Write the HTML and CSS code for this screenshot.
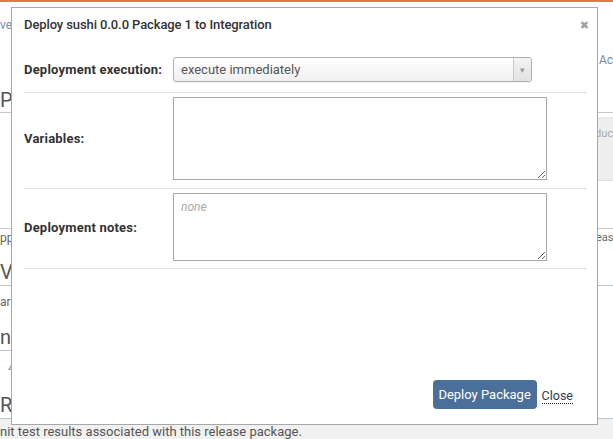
FILE: index.html
```html
<!DOCTYPE html>
<html>
<head>
<meta charset="utf-8">
<link rel="stylesheet" href="styles.css">
</head>
<body>
<div class="topbar"></div>
<div class="page">
  <div class="bg-row r-tabs"><span class="t-sm t-link">ver</span></div>
  <div class="bg-row r-pipe">
    <span class="t-lg r-pipe-h">Pip</span>
    <span class="t-sm t-link r-act">Ac</span>
  </div>
  <div class="bg-row r-block">
    <span></span>
    <div class="side-grey"><span class="t-xs t-muted">duc</span></div>
  </div>
  <div class="bg-row r-app">
    <span class="t-sm">pp</span>
    <span class="t-xs r-eas">eas</span>
  </div>
  <div class="bg-row r-var"><span class="t-lg">Va</span></div>
  <div class="bg-row r-sm"><span class="t-sm">ari</span></div>
  <div class="bg-row r-unit"><span class="t-lg">n</span></div>
  <div class="bg-row r-time"><span class="t-sm t-teal">4:</span></div>
  <div class="bg-row r-re"><span class="t-lg">Re</span></div>
  <div class="bg-row r-foot"><span class="t-foot">nit test results associated with this release package.</span></div>
</div>

<div class="modal">
  <div class="modal-head">
    <div class="modal-title">Deploy sushi 0.0.0 Package 1 to Integration</div>
    <div class="modal-x">&#x2716;</div>
  </div>
  <div class="modal-body">
    <div class="row row-first">
      <div class="label">Deployment execution:</div>
      <div class="field">
        <div class="select">
          <span class="select-text">execute immediately</span>
          <span class="select-arrow">&#9662;</span>
        </div>
      </div>
    </div>
    <div class="row">
      <div class="label">Variables:</div>
      <div class="field"><textarea class="ta ta-vars"></textarea></div>
    </div>
    <div class="row row-last">
      <div class="label">Deployment notes:</div>
      <div class="field"><textarea class="ta ta-notes" placeholder="none"></textarea></div>
    </div>
  </div>
  <div class="modal-foot">
    <button class="btn">Deploy Package</button>
    <a class="close-link">Close</a>
  </div>
</div>
</body>
</html>
```
FILE: styles.css
```css
html, body {
  margin: 0;
  padding: 0;
}
body {
  width: 613px;
  height: 439px;
  overflow: hidden;
  background: #fff;
  font-family: Roboto, "Open Sans", sans-serif;
  color: #333;
  position: relative;
}
.topbar {
  height: 2px;
  background: #e8734e;
}
.page {
  display: flex;
  flex-direction: column;
}
.bg-row {
  display: flex;
  justify-content: space-between;
  align-items: flex-start;
  white-space: nowrap;
  overflow: hidden;
}
.t-sm {
  font-size: 12px;
  line-height: 16px;
  color: #666;
}
.t-xs {
  font-size: 11px;
  line-height: 16px;
  color: #666;
}
.t-lg {
  font-size: 20px;
  line-height: 24px;
  color: #555;
}
.t-link {
  color: #7a8aa8;
}
.t-muted {
  color: #a8a8a8;
}
.t-teal {
  color: #5fa3a8;
  padding-left: 8px;
}
.r-tabs {
  margin-top: 15px;
  height: 16px;
}
.r-pipe {
  height: 79px;
  border-bottom: 1px solid #c8c8c8;
}
.r-pipe-h {
  align-self: flex-end;
  padding-bottom: 0;
}
.r-act {
  margin-top: 19px;
  padding-right: 0;
}
.r-block {
  height: 115px;
  border-bottom: 1px solid #c8c8c8;
}
.side-grey {
  width: 18px;
  height: 64px;
  margin-top: 4px;
  padding-top: 4px;
  background: #eee;
  border-top: 1px solid #e4e4e4;
  border-bottom: 1px solid #ddd;
  box-sizing: border-box;
}
.r-app {
  height: 16px;
  padding-top: 1px;
}
.r-eas {
  width: 17px;
}
.r-var {
  margin-top: 13px;
  height: 26px;
  border-bottom: 1px solid #b8c4d0;
}
.r-var .t-lg, .r-unit .t-lg, .r-re .t-lg {
  line-height: 26px;
}
.r-sm {
  margin-top: 8px;
  height: 16px;
}
.r-unit {
  margin-top: 14px;
  height: 26px;
  width: 200px;
  border-bottom: 1px solid #b8c4d0;
}
.r-time {
  margin-top: 9px;
  height: 16px;
}
.r-re {
  margin-top: 16px;
  height: 26px;
  border-bottom: 1px solid #b8c4d0;
}
.r-foot {
  background: #f1f1f1;
  height: 30px;
  padding-top: 5px;
  box-sizing: border-box;
}
.t-foot {
  font-size: 13px;
  line-height: 16px;
  color: #555;
}

/* modal */
.modal {
  position: absolute;
  left: 11px;
  top: 7px;
  width: 585px;
  height: 416px;
  background: #fff;
  border: 1px solid #a8a8a8;
  display: flex;
  flex-direction: column;
}
.modal-head {
  height: 44px;
  display: flex;
  align-items: flex-start;
  justify-content: space-between;
  padding: 0 8px 0 12px;
}
.modal-title {
  font-size: 13px;
  font-weight: 500;
  color: #333;
  margin-top: 9px;
  letter-spacing: -0.1px;
}
.modal-x {
  font-size: 11px;
  color: #a0a0a0;
  margin-top: 11px;
  font-family: "DejaVu Sans", sans-serif;
}
.modal-body {
  padding: 0 10px 0 12px;
}
.row {
  display: flex;
  align-items: center;
  border-bottom: 1px solid #dedede;
  padding: 4px 0 8px;
}
.row-first {
  padding: 5px 0 10px;
}
.row-last {
  padding-bottom: 7px;
}
.label {
  width: 149px;
  font-size: 13px;
  font-weight: 700;
  color: #333;
  letter-spacing: 0.2px;
}
.field {
  display: flex;
}
.select {
  width: 357px;
  height: 23px;
  border: 1px solid #b0b0b0;
  border-radius: 3px;
  background: linear-gradient(#fff, #f0f0f0);
  display: flex;
  align-items: center;
  justify-content: space-between;
  box-shadow: 0 1px 1px rgba(0,0,0,0.05);
}
.select-text {
  font-size: 13px;
  color: #555;
  padding-left: 7px;
}
.select-arrow {
  width: 17px;
  height: 23px;
  border-left: 1px solid #ccc;
  font-size: 9px;
  color: #999;
  display: flex;
  align-items: center;
  justify-content: center;
  background: linear-gradient(#f4f4f4, #e2e2e2);
  border-radius: 0 3px 3px 0;
}
.ta {
  width: 374px;
  box-sizing: border-box;
  border: 1px solid #a8a8a8;
  margin: 0;
  padding: 6px 7px;
  font-family: Roboto, sans-serif;
  font-size: 12px;
  resize: vertical;
  display: block;
  border-radius: 0;
}
.ta-vars {
  height: 83px;
}
.ta-notes {
  height: 68px;
}
.ta::placeholder {
  color: #aaa;
  font-style: italic;
}
.modal-foot {
  margin-top: auto;
  display: flex;
  justify-content: flex-end;
  align-items: center;
  gap: 5px;
  padding: 0 24px 15px 0;
}
.btn {
  background: #4a6f9a;
  color: #fff;
  border: none;
  border-radius: 4px;
  font-family: Roboto, sans-serif;
  font-size: 13px;
  height: 29px;
  width: 104px;
  padding: 0;
}
.close-link {
  font-size: 12.5px;
  color: #2b3b55;
  border-bottom: 1px dotted #222;
  line-height: 15px;
  margin-top: 2px;
}
```
